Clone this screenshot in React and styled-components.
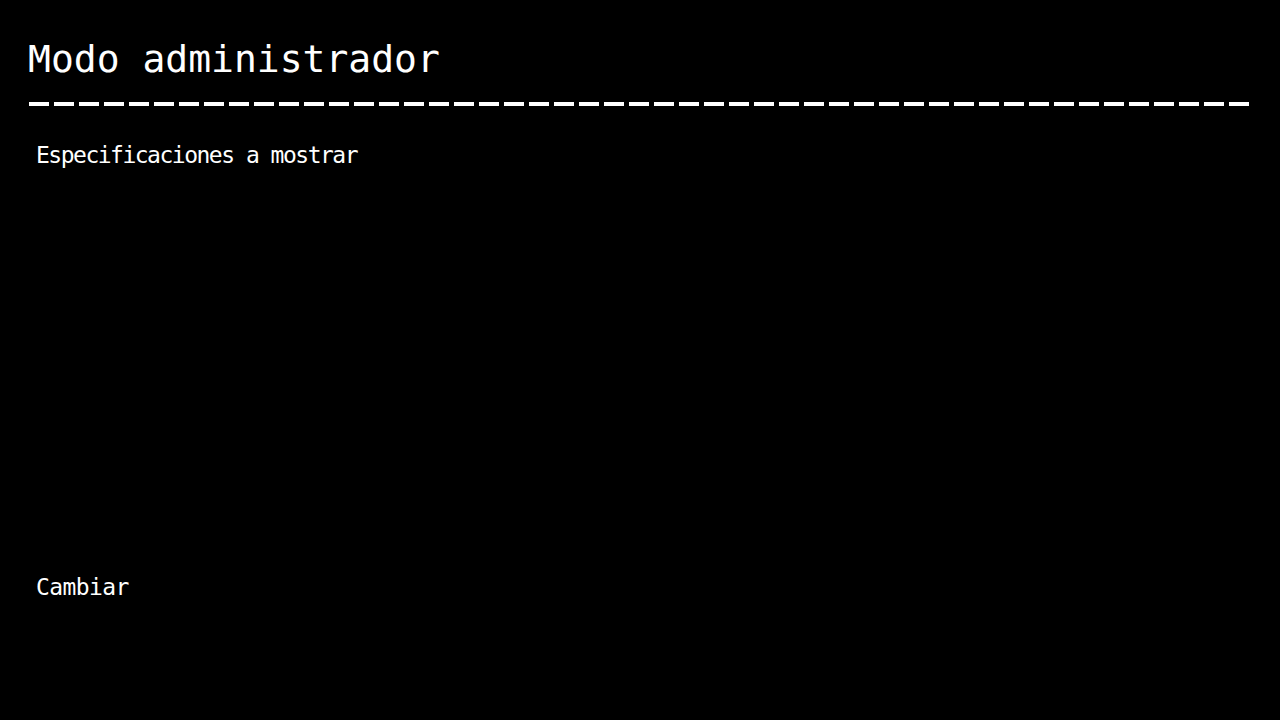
import React from 'react';
import styled, { createGlobalStyle } from 'styled-components';

const GlobalStyle = createGlobalStyle`
  html, body {
    margin: 0;
    padding: 0;
    background: #000;
    color: #fff;
  }
  body {
    font-family: "DejaVu Sans Mono", monospace;
  }
`;

const Screen = styled.div`
  box-sizing: border-box;
  width: 100%;
  height: 720px;
  padding: 36px 31px 0 28px;
  display: flex;
  flex-direction: column;
`;

const Title = styled.h1`
  margin: 0;
  font-family: "DejaVu Sans Mono", monospace;
  font-weight: normal;
  font-size: 38px;
  line-height: 46px;
  letter-spacing: 0;
`;

const Divider = styled.div`
  margin: 20px 0 0 1px;
  height: 4px;
  width: 1220px;
  background: repeating-linear-gradient(
    to right,
    #fff 0,
    #fff 20px,
    transparent 20px,
    transparent 25px
  );
`;

const Section = styled.section`
  display: flex;
  flex-direction: column;
  padding: 34px 0 0 8px;
  flex: 1;
`;

const Label = styled.div`
  font-family: "DejaVu Sans Mono", monospace;
  font-size: 23px;
  line-height: 30px;
  letter-spacing: -1.5px;
`;

const SpecList = styled.div`
  height: 402px;
`;

const ActionButton = styled.button`
  align-self: flex-start;
  background: none;
  border: none;
  padding: 0;
  color: #fff;
  font-family: "DejaVu Sans Mono", monospace;
  font-size: 23px;
  line-height: 30px;
  letter-spacing: -0.6px;
  cursor: pointer;
`;

export default function App() {
  return (
    <>
      <GlobalStyle />
      <Screen>
        <Title>Modo administrador</Title>
        <Divider />
        <Section>
          <Label>Especificaciones a mostrar</Label>
          <SpecList />
          <ActionButton>Cambiar</ActionButton>
        </Section>
      </Screen>
    </>
  );
}
